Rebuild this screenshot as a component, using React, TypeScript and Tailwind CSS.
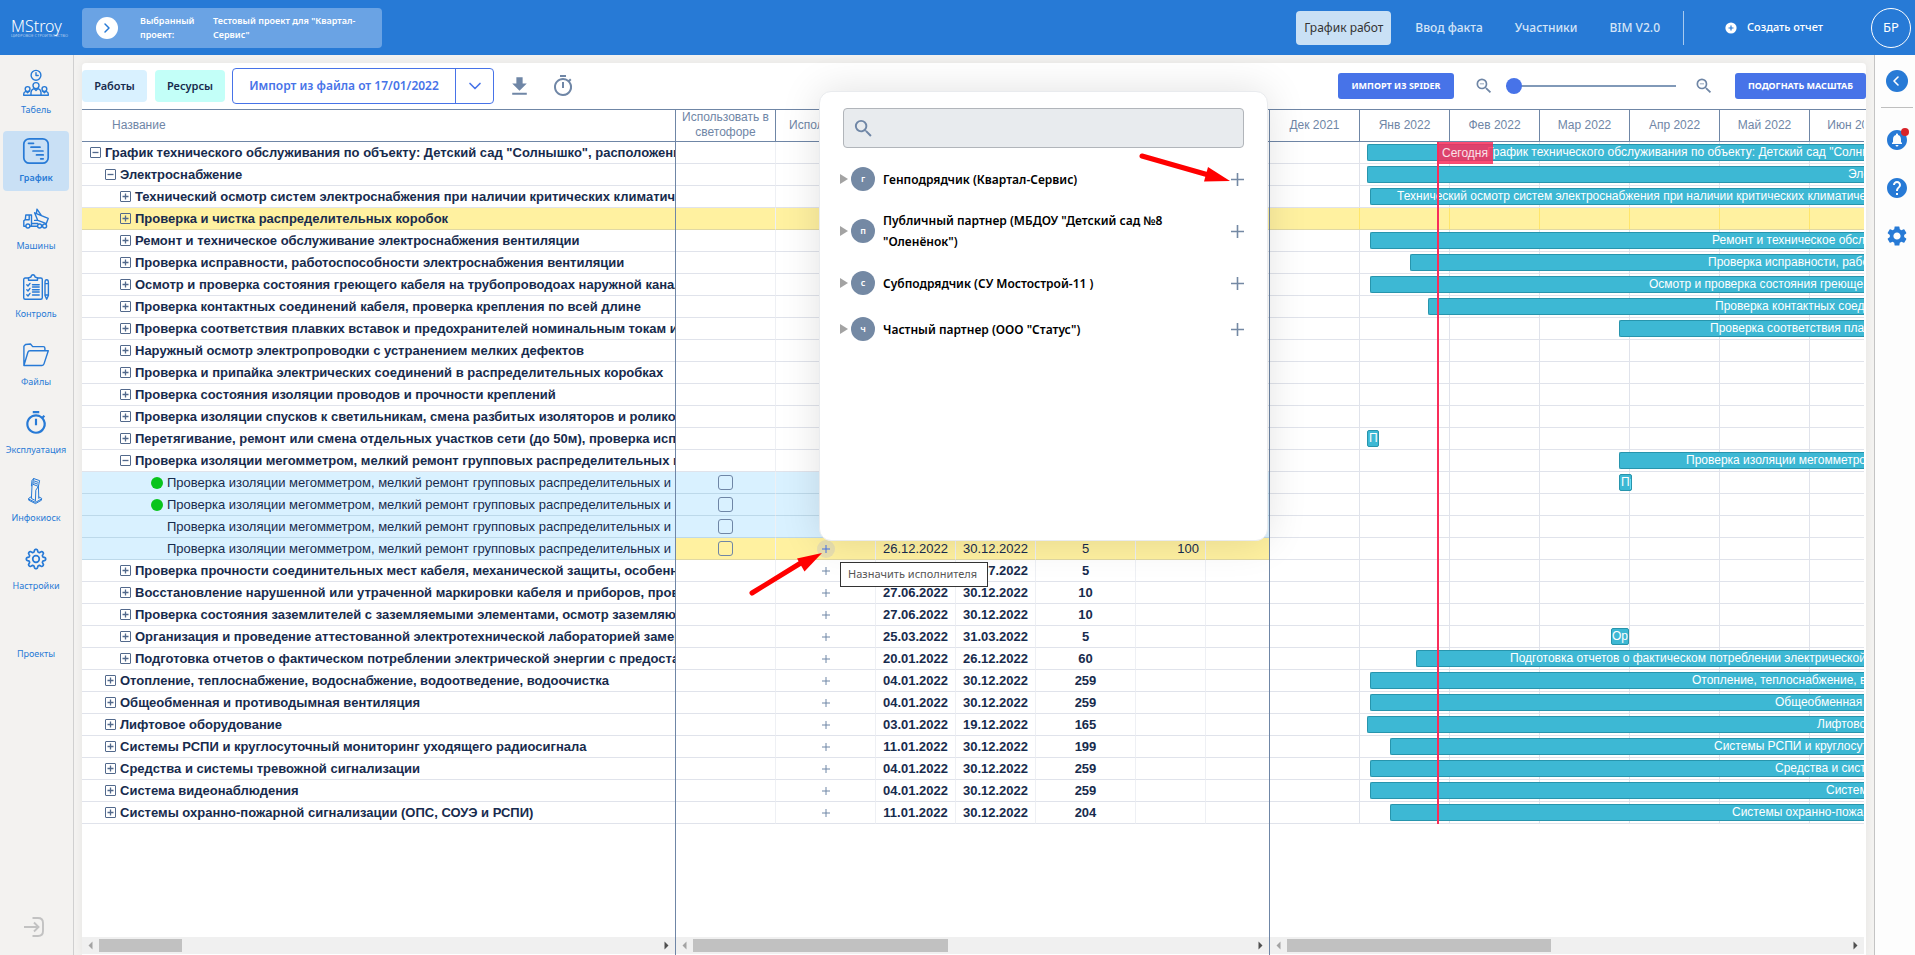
import type { ReactNode } from 'react';
import clsx from 'clsx';
import { ChevronDown, ChevronLeft, ChevronRight } from 'lucide-react';
import {
  MdCircleNotifications,
  MdFileDownload,
  MdHelp,
  MdOutlineTimer,
  MdSearch,
  MdSettings,
  MdZoomOut,
} from 'react-icons/md';

interface Task {
  name: string;
  level: number;
  open?: boolean;
  leaf?: boolean;
  dot?: boolean;
  start?: string;
  end?: string;
  days?: string;
  percent?: string;
  // x of the bar and of its label on the time scale, in pixels
  bar?: { x: number; width?: number; label: number };
}

const MEGA = 'Проверка изоляции мегомметром, мелкий ремонт групповых распределительных и';

const TASKS: Task[] = [
  { name: 'График технического обслуживания по объекту: Детский сад "Солнышко", расположенному', level: 0, open: true, bar: { x: 97, label: 217 } },
  { name: 'Электроснабжение', level: 1, open: true, bar: { x: 97, label: 578 } },
  { name: 'Технический осмотр систем электроснабжения при наличии критических климатических', level: 2, bar: { x: 100, label: 127 } },
  { name: 'Проверка и чистка распределительных коробок', level: 2 },
  { name: 'Ремонт и техническое обслуживание электроснабжения вентиляции', level: 2, bar: { x: 100, label: 442 } },
  { name: 'Проверка исправности, работоспособности электроснабжения вентиляции', level: 2, bar: { x: 140, label: 438 } },
  { name: 'Осмотр и проверка состояния греющего кабеля на трубопроводоах наружной канализации', level: 2, bar: { x: 100, label: 379 } },
  { name: 'Проверка контактных соединений кабеля, проверка крепления по всей длине', level: 2, bar: { x: 158, label: 445 } },
  { name: 'Проверка соответствия плавких вставок и предохранителей номинальным токам и', level: 2, bar: { x: 349, label: 440 } },
  { name: 'Наружный осмотр электропроводки с устранением мелких дефектов', level: 2 },
  { name: 'Проверка и припайка электрических соединений в распределительных коробках', level: 2 },
  { name: 'Проверка состояния изоляции проводов и прочности креплений', level: 2 },
  { name: 'Проверка изоляции спусков к светильникам, смена разбитых изоляторов и роликов', level: 2 },
  { name: 'Перетягивание, ремонт или смена отдельных участков сети (до 50м), проверка исправности', level: 2, bar: { x: 97, width: 12, label: 99 } },
  { name: MEGA, level: 2, open: true, bar: { x: 349, label: 416 } },
  { name: MEGA, level: 3, leaf: true, dot: true, bar: { x: 349, width: 13, label: 351 } },
  { name: MEGA, level: 3, leaf: true, dot: true },
  { name: MEGA, level: 3, leaf: true },
  { name: MEGA, level: 3, leaf: true, start: '26.12.2022', end: '30.12.2022', days: '5', percent: '100' },
  { name: 'Проверка прочности соединительных мест кабеля, механической защиты, особенно', level: 2, end: '29.07.2022', days: '5' },
  { name: 'Восстановление нарушенной или утраченной маркировки кабеля и приборов, проверка', level: 2, start: '27.06.2022', end: '30.12.2022', days: '10' },
  { name: 'Проверка состояния заземлителей с заземляемыми элементами, осмотр заземляющих', level: 2, start: '27.06.2022', end: '30.12.2022', days: '10' },
  { name: 'Организация и проведение аттестованной электротехнической лабораторией замеров', level: 2, start: '25.03.2022', end: '31.03.2022', days: '5', bar: { x: 341, width: 18, label: 342 } },
  { name: 'Подготовка отчетов о фактическом потреблении электрической энергии с предоставлением', level: 2, start: '20.01.2022', end: '26.12.2022', days: '60', bar: { x: 146, label: 240 } },
  { name: 'Отопление, теплоснабжение, водоснабжение, водоотведение, водоочистка', level: 1, start: '04.01.2022', end: '30.12.2022', days: '259', bar: { x: 100, label: 422 } },
  { name: 'Общеобменная и противодымная вентиляция', level: 1, start: '04.01.2022', end: '30.12.2022', days: '259', bar: { x: 100, label: 505 } },
  { name: 'Лифтовое оборудование', level: 1, start: '03.01.2022', end: '19.12.2022', days: '165', bar: { x: 97, label: 547 } },
  { name: 'Системы РСПИ и круглосуточный мониторинг уходящего радиосигнала', level: 1, start: '11.01.2022', end: '30.12.2022', days: '199', bar: { x: 120, label: 444 } },
  { name: 'Средства и системы тревожной сигнализации', level: 1, start: '04.01.2022', end: '30.12.2022', days: '259', bar: { x: 100, label: 505 } },
  { name: 'Система видеонаблюдения', level: 1, start: '04.01.2022', end: '30.12.2022', days: '259', bar: { x: 100, label: 556 } },
  { name: 'Системы охранно-пожарной сигнализации (ОПС, СОУЭ и РСПИ)', level: 1, start: '11.01.2022', end: '30.12.2022', days: '204', bar: { x: 120, label: 462 } },
];

const HOVERED = 3;
const SELECTED = 18;

const MONTHS = ['Дек 2021', 'Янв 2022', 'Фев 2022', 'Мар 2022', 'Апр 2022', 'Май 2022', 'Июн 2022'];

const CONTRACTORS = [
  { letter: 'г', name: 'Генподрядчик (Квартал-Сервис)' },
  { letter: 'п', name: 'Публичный партнер (МБДОУ "Детский сад №8 "Оленёнок")' },
  { letter: 'с', name: 'Субподрядчик (СУ Мостострой-11 )' },
  { letter: 'ч', name: 'Частный партнер (ООО "Статус")' },
];

// eight-lobed gear outline around 13,13
const GEAR = Array.from({ length: 97 }, (_, i) => {
  const a = (i / 96) * Math.PI * 2;
  const r = 8.4 + 1.3 * Math.tanh(2 * Math.cos(8 * a));
  return `${i ? 'L' : 'M'}${(13 + r * Math.sin(a)).toFixed(2)} ${(13 - r * Math.cos(a)).toFixed(2)}`;
}).join('') + 'Z';

function Line({ children, width = 1.4 }: { children: ReactNode; width?: number }) {
  return (
    <svg
      viewBox="0 0 26 26"
      className="size-[26px] overflow-visible"
      fill="none"
      stroke="currentColor"
      strokeWidth={width}
      strokeLinecap="round"
      strokeLinejoin="round"
    >
      {children}
    </svg>
  );
}

const MENU: { label: string; icon: ReactNode; active?: boolean }[] = [
  {
    label: 'Табель',
    icon: (
      <Line>
        <circle cx="13" cy="5.3" r="4.9" />
        <path d="M13 2.6v2.9h2.2" />
        <circle cx="13" cy="15.6" r="3" />
        <circle cx="4.6" cy="19" r="2.4" />
        <circle cx="21.4" cy="19" r="2.4" />
        <path d="M8 25.3v-2.8c0-2 1-3.3 3-3.9l2 2 2-2c2 .6 3 1.9 3 3.9v2.8M.7 25.3V24c0-1.5.8-2.3 2.2-2.7l1.7 1.4 1.7-1.4M25.3 25.3V24c0-1.5-.8-2.3-2.2-2.7l-1.7 1.4-1.7-1.4M.7 25.3h24.6" />
      </Line>
    ),
  },
  {
    label: 'График',
    active: true,
    icon: (
      <Line width={1.7}>
        <rect x=".8" y=".8" width="24.4" height="24.4" rx="5.5" />
        <path d="M5.5 5.3h5M8 9.2h9M10 13h10M13.5 16.9h6.7M17.7 20.8h2.5" />
      </Line>
    ),
  },
  {
    label: 'Машины',
    icon: (
      <Line>
        <path d="M2.6 20.2H.8v-5.4l1.5-1.2.5-4.6h5.7v11.2H7.2M2.6 13.8h3.6V9.2M8.6 17.5h6.2M8.6 20.2h5.6M11.6 6.8l13.6 5.6-2 5.3-3-1.3M11.6 6.8l3.2 7.6 5.4 2M14 3.2l-.6 4.2M14 3.2l4.3 6.2M11.6 14.4h3.2" />
        <circle cx="4.9" cy="20" r="2" />
        <circle cx="16.6" cy="20" r="2" />
        <circle cx="21.6" cy="20" r="2" />
      </Line>
    ),
  },
  {
    label: 'Контроль',
    icon: (
      <Line>
        <path d="M5.5 4H2.2C1.3 4 .7 4.6.7 5.5v18.2c0 .9.6 1.5 1.5 1.5h15.6c.9 0 1.5-.6 1.5-1.5V5.5c0-.9-.6-1.5-1.5-1.5h-3.3" />
        <path d="M5.5 6.2V3.8L8 3c.2-1.4.9-2.2 2-2.2s1.8.8 2 2.2l2.5.8v2.4z" />
        <path d="M3.8 10.8L5 12l2-2.6M3.8 15.8L5 17l2-2.6M3.8 20.8L5 22l2-2.6M9.5 10.8h6.7M9.5 13h6.7M9.5 15.8h6.7M9.5 18h6.7M9.5 21h6.7" />
        <path d="M22 8.5c0-3.6 3.4-3.6 3.4 0v13l-1.7 3.7-1.7-3.7zM22 9.6h3.4M22 21h3.4" />
      </Line>
    ),
  },
  {
    label: 'Файлы',
    icon: (
      <Line>
        <path d="M.9 23.500V4.200l1.600-1.700 5-.5 2.200 2.600h10.600c1 0 1.600.6 1.600 1.600v2.500M.9 23.500l4-13.200c.3-1 1-1.600 2-1.600h18.400L21 21.900c-.3 1-1 1.600-2 1.600z" />
      </Line>
    ),
  },
  { label: 'Эксплуатация', icon: <MdOutlineTimer className="size-[26px]" /> },
  {
    label: 'Инфокиоск',
    icon: (
      <Line width={1}>
        <path d="M10.800.6l5.800 2-1.200 5.800-5.200-2zM10.800.6L9 2.400 8.400 8l1.800-1.600M9 7.800l-.6 12.700 3 1.500M15.400 8.400l-2.600 3.800-.4 11M15.400 8.400l.4 12M11.400 3l3.600 1.300M11 4.800l3.600 1.300M8.400 18.600l-2.500 1.600c-.5.3-.5.7 0 1l6.600 3.200 5.800-3.300c.5-.3.5-.7 0-1L15.800 19M5.700 21v1.200l6.800 3.400 6-3.400V21" />
      </Line>
    ),
  },
  {
    label: 'Настройки',
    icon: (
      <Line width={1.7}>
        <path d={GEAR} />
        <circle cx="13" cy="13" r="3.3" />
      </Line>
    ),
  },
  { label: 'Проекты', icon: <span className="size-[26px]" /> },
];

function Header() {
  return (
    <header className="flex h-[55px] shrink-0 items-center bg-[#277ad6] pr-1 text-xs text-white">
      <a href="#" className="flex w-[82px] flex-col pl-[11px]">
        <span className="text-base leading-4 font-light">MStroy</span>
        <span className="text-[4px] leading-[4px] text-white/60">ЦИФРОВОЕ СТРОИТЕЛЬСТВО</span>
      </a>
      <button
        type="button"
        className="flex h-10 w-[300px] items-center rounded bg-[#6aa3e4] text-left text-[9px] leading-[14px] font-semibold"
      >
        <span className="ml-3.5 flex size-[22px] items-center justify-center rounded-full bg-white text-[#277ad6]">
          <ChevronRight size={16} strokeWidth={2.2} />
        </span>
        <span className="ml-[22px] w-[73px] pr-4">Выбранный проект:</span>
        <span className="w-[160px]">Тестовый проект для "Квартал-Сервис"</span>
      </button>

      <nav className="ml-auto flex items-center gap-4 font-medium text-[#d4e4f7]">
        <a href="#" className="flex h-[34px] items-center rounded-sm bg-[#c9e0f5] px-2 font-normal text-[#333]">
          График работ
        </a>
        <a href="#" className="px-2">Ввод факта</a>
        <a href="#" className="px-2">Участники</a>
        <a href="#" className="px-2">BIM V2.0</a>
      </nav>
      <div className="ml-[15px] h-[34px] w-px bg-[#a8caef]" />
      <button type="button" className="ml-[41px] flex items-center gap-2.5 text-[11px] font-medium">
        <svg viewBox="0 0 12 12" className="size-3">
          <circle cx="6" cy="6" r="5.6" fill="#fff" />
          <path d="M6 3.500v5M3.500 6h5" stroke="#277ad6" strokeWidth="1.2" />
        </svg>
        Создать отчет
      </button>
      <button
        type="button"
        className="ml-12 flex size-10 items-center justify-center rounded-full border border-white text-[13px]"
      >
        БР
      </button>
    </header>
  );
}

function Sidebar() {
  return (
    <aside className="flex w-[74px] shrink-0 flex-col border-r border-[#d0d0d0] pt-2 text-[#277ad6]">
      <nav className="flex flex-col gap-2 pr-1 pl-[3px]">
        {MENU.map((item) => (
          <a
            key={item.label}
            href="#"
            className={clsx(
              'flex h-[60px] flex-col items-center rounded-sm pt-[7px] text-[9px] leading-3',
              item.active && 'bg-[#c9e0f5] font-semibold',
            )}
          >
            {item.icon}
            <span className="mt-2">{item.label}</span>
          </a>
        ))}
      </nav>
      <button type="button" aria-label="Выход" className="mt-auto mb-[18px] ml-6 self-start text-[#c2c2c2]">
        <svg viewBox="0 0 20 20" className="size-5" fill="none" stroke="currentColor" strokeWidth="1.9">
          <path d="M0 10h14.500M10 5.500l4.500 4.500-4.500 4.500M8.500 1H14c3 0 5 2 5 5v8c0 3-2 5-5 5H8.500" />
        </svg>
      </button>
    </aside>
  );
}

function Toolbar() {
  return (
    <div className="flex h-[47px] shrink-0 items-center border-b border-[#6f86a6] text-[#6f86a6]">
      <button type="button" className="h-8 w-[65px] rounded-sm bg-[#d9f1ff] text-[11px] font-semibold text-[#172b4d]">
        Работы
      </button>
      <button type="button" className="ml-2 h-8 w-[70px] rounded-sm bg-[#c3fff8] text-[11px] font-semibold text-[#172b4d]">
        Ресурсы
      </button>
      <div className="ml-[7px] flex h-9 w-[262px] rounded-sm border border-[#4773e8] text-[#4773e8]">
        <button type="button" className="flex-1 text-xs font-semibold">Импорт из файла от 17/01/2022</button>
        <button type="button" aria-label="Выбрать файл" className="flex w-[38px] items-center justify-center border-l border-[#4773e8]">
          <ChevronDown size={20} strokeWidth={2} />
        </button>
      </div>
      <button type="button" aria-label="Скачать" className="ml-[13px]">
        <MdFileDownload className="size-[25px]" />
      </button>
      <button type="button" aria-label="Таймер" className="ml-[19px]">
        <MdOutlineTimer className="size-6" />
      </button>

      <button
        type="button"
        className="ml-auto h-[26px] w-[116px] rounded-[3px] bg-[#4773e8] text-[9px] font-bold text-white"
      >
        ИМПОРТ ИЗ SPIDER
      </button>
      <button type="button" aria-label="Уменьшить" className="ml-5">
        <MdZoomOut className="size-5" />
      </button>
      <input
        type="range"
        aria-label="Масштаб"
        defaultValue={0}
        className="mx-3 h-4 w-[170px] appearance-none bg-transparent [&::-webkit-slider-runnable-track]:h-0.5 [&::-webkit-slider-runnable-track]:bg-[#8199b8] [&::-webkit-slider-thumb]:-mt-[7px] [&::-webkit-slider-thumb]:size-4 [&::-webkit-slider-thumb]:appearance-none [&::-webkit-slider-thumb]:rounded-full [&::-webkit-slider-thumb]:bg-[#4773e8]"
      />
      <button type="button" aria-label="Увеличить" className="ml-1.5">
        <MdZoomOut className="size-5" />
      </button>
      <button
        type="button"
        className="ml-[21px] h-[26px] w-[131px] rounded-[3px] bg-[#4773e8] text-[9px] font-bold text-white"
      >
        ПОДОГНАТЬ МАСШТАБ
      </button>
    </div>
  );
}

function Toggle({ open }: { open?: boolean }) {
  return (
    <button type="button" aria-label={open ? 'Свернуть' : 'Развернуть'} className="mr-1 size-[11px] shrink-0">
      <svg viewBox="0 0 11 11" className="size-[11px]" fill="none" stroke="#52698c">
        <rect x=".5" y=".5" width="10" height="10" rx=".5" />
        <path d={open ? 'M2.500 5.500h6' : 'M2.500 5.500h6M5.500 2.500v6'} strokeWidth="1.3" />
      </svg>
    </button>
  );
}

function ScrollBar({ thumb }: { thumb: ReactNode }) {
  return (
    <div className="mt-auto mb-px flex h-[17px] shrink-0 items-center bg-[#f0f0f0]">
      <svg viewBox="0 0 17 17" className="size-[17px]" fill="#a3a3a3">
        <path d="M10.500 4.500v8l-4-4z" />
      </svg>
      {thumb}
      <svg viewBox="0 0 17 17" className="ml-auto size-[17px]" fill="#505050">
        <path d="M6.500 4.500v8l4-4z" />
      </svg>
    </div>
  );
}

function NamePane() {
  return (
    <div className="flex w-[594px] shrink-0 flex-col border-r border-[#6f86a6]">
      <table className="w-full table-fixed border-separate border-spacing-0">
        <thead>
          <tr>
            <th className="h-8 border-b border-[#6f86a6] p-0 pb-0.5 pl-[30px] text-left text-xs font-normal text-[#6f86a6]">
              Название
            </th>
          </tr>
        </thead>
        <tbody>
          {TASKS.map((task, i) => (
            <tr key={i} className={clsx(i === HOVERED && 'bg-[#fff1a0]', task.leaf && 'bg-[#d9f1ff]')}>
              <td
                className={clsx(
                  'h-[22px] overflow-hidden border-b p-0',
                  i === HOVERED ? 'border-[#e0d8a4]' : task.leaf ? 'border-[#bdd9ea]' : 'border-[#e0e3eb]',
                )}
              >
                <div
                  className={clsx(
                    'flex h-[21px] items-center text-[13px] whitespace-nowrap text-[#172b4d]',
                    task.level === 0 && 'pl-2 font-bold',
                    task.level === 1 && 'pl-[23px] font-bold',
                    task.level === 2 && 'pl-[38px] font-bold',
                    task.level === 3 && 'pl-[69px]',
                  )}
                >
                  {task.leaf ? (
                    <span className={clsx('mr-1 size-3 shrink-0 rounded-full', task.dot && 'bg-[#09c41c]')} />
                  ) : (
                    <Toggle open={task.open} />
                  )}
                  {task.name}
                </div>
              </td>
            </tr>
          ))}
        </tbody>
      </table>
      <ScrollBar thumb={<div className="h-[13px] w-[83px] bg-[#c1c1c1]" />} />
    </div>
  );
}

function DataPane() {
  return (
    <div className="relative flex w-[594px] shrink-0 flex-col border-r border-[#6f86a6]">
      <table className="w-full table-fixed border-separate border-spacing-0">
        <colgroup>
          <col className="w-[100px]" />
          <col className="w-[100px]" />
          <col className="w-[80px]" />
          <col className="w-[80px]" />
          <col className="w-[100px]" />
          <col className="w-[70px]" />
          <col />
        </colgroup>
        <thead>
          <tr className="text-xs leading-[15px] text-[#6f86a6] [&>th]:h-8 [&>th]:border-r [&>th]:border-b [&>th]:border-[#6f86a6] [&>th]:p-0 [&>th]:pb-px [&>th]:font-normal [&>th:last-child]:border-r-0">
            <th>Использовать в светофоре</th>
            <th>Исполнитель</th>
            <th />
            <th />
            <th />
            <th />
            <th />
          </tr>
        </thead>
        <tbody>
          {TASKS.map((task, i) => {
            const yellow = i === HOVERED || i === SELECTED;
            return (
              <tr
                key={i}
                className={clsx(
                  'text-center text-[13px] leading-[21px] text-[#172b4d] [&>td]:h-[22px] [&>td]:border-r [&>td]:border-b [&>td]:border-r-[#eef0f4] [&>td]:p-0 [&>td:last-child]:border-r-0',
                  !task.leaf && 'font-bold',
                  yellow
                    ? 'bg-[#fff1a0] [&>td]:border-b-[#e0d8a4]'
                    : task.leaf
                      ? 'bg-[#d9f1ff] [&>td]:border-b-[#bdd9ea]'
                      : '[&>td]:border-b-[#e0e3eb]',
                )}
              >
                <td>
                  {task.leaf && (
                    <input
                      type="checkbox"
                      aria-label={task.name}
                      className="mx-auto block size-[15px] appearance-none rounded-[3px] border border-[#6f86a6]"
                    />
                  )}
                </td>
                <td>
                  {task.days && (
                    <button
                      type="button"
                      aria-label="Назначить исполнителя"
                      className={clsx(
                        'mx-auto flex size-[18px] items-center justify-center rounded-full',
                        i === SELECTED ? 'bg-[#e9e0b0] text-[#4773e8]' : 'text-[#6f86a6]',
                      )}
                    >
                      <svg viewBox="0 0 8 8" className="size-2" stroke="currentColor">
                        <path d="M4 0v8M0 4h8" />
                      </svg>
                    </button>
                  )}
                </td>
                <td>{task.start}</td>
                <td>{task.end}</td>
                <td>{task.days}</td>
                <td className="text-right"><span className="pr-1.5">{task.percent}</span></td>
                <td />
              </tr>
            );
          })}
        </tbody>
      </table>
      <ScrollBar thumb={<div className="h-[13px] w-[255px] bg-[#c1c1c1]" />} />
      <ContractorPopup />
      <div
        role="tooltip"
        className="absolute top-[452px] left-[164px] z-20 flex h-[25px] w-[148px] items-center border border-[#333] bg-white pl-[7px] font-['Noto_Sans',sans-serif] text-[11px] text-[#555]"
      >
        Назначить исполнителя
      </div>
      {/* pointers to the two "plus" buttons */}
      <svg viewBox="0 0 594 500" className="pointer-events-none absolute top-0 left-0 z-30 h-[500px] w-[594px]" fill="#f00">
        <path d="M466 46l70 20" stroke="#f00" strokeWidth="5" strokeLinecap="round" />
        <path d="M554 71l-22-14-4 14.500z" />
        <path d="M76 483l52-32" stroke="#f00" strokeWidth="5" strokeLinecap="round" />
        <path d="M146 443l-25 5.500 7.500 13z" />
      </svg>
    </div>
  );
}

function ContractorPopup() {
  return (
    <div className="absolute -top-[19px] right-px z-10 h-[450px] w-[449px] rounded-xl border border-[#e9ebee] bg-white px-[23px] pt-4 font-['Noto_Sans',sans-serif] shadow-[0_0_40px_rgba(0,0,0,0.12)]">
      <label className="flex h-10 items-center rounded border border-[#b1b5ba] bg-[#e8ebee] px-2 text-[#6f86a6]">
        <MdSearch className="size-[23px]" />
        <input type="text" aria-label="Поиск" className="flex-1 bg-transparent text-xs outline-none" />
      </label>
      <ul className="mt-4 flex flex-col gap-4">
        {CONTRACTORS.map((c) => (
          <li key={c.letter} className="-ml-[3px] flex min-h-[30px] items-center">
            <svg viewBox="0 0 8 10" className="mr-[3px] h-2.5 w-2" fill="#a3a3a3">
              <path d="M0 0l8 5-8 5z" />
            </svg>
            <span className="flex size-6 shrink-0 items-center justify-center rounded-full bg-[#7489a4] text-[9px] font-semibold text-white">
              {c.letter}
            </span>
            <span className="ml-2 w-[300px] text-xs leading-[21px] font-semibold text-black">{c.name}</span>
            <button type="button" aria-label="Добавить" className="ml-auto text-[#7489a4]">
              <svg viewBox="0 0 13 13" className="size-[13px]" stroke="currentColor" strokeWidth="1.6">
                <path d="M6.500 0v13M0 6.500h13" />
              </svg>
            </button>
          </li>
        ))}
      </ul>
    </div>
  );
}

function GanttPane() {
  return (
    <div className="mr-0.5 flex min-w-0 flex-1 flex-col overflow-hidden">
      <div className="flex h-8 shrink-0 border-b border-[#6f86a6] text-xs text-[#6f86a6]">
        {MONTHS.map((m) => (
          <div key={m} className="flex w-[90px] shrink-0 items-center justify-center border-r border-[#6f86a6] pb-0.5">
            {m}
          </div>
        ))}
      </div>
      <div className="relative">
        {TASKS.map((task, i) => (
          <div
            key={i}
            className={clsx(
              'relative flex h-[22px] border-b pt-0.5',
              i === HOVERED ? 'border-[#e0d8a4] bg-[#fff1a0]' : 'border-[#e0e3eb]',
            )}
          >
            <div className="absolute inset-0 flex">
              {MONTHS.map((m) => (
                <span
                  key={m}
                  className={clsx('w-[90px] shrink-0 border-r', i === HOVERED ? 'border-[#ffe66b]' : 'border-[#e0e3eb]')}
                />
              ))}
            </div>
            {task.bar && (
              <div
                className={clsx(
                  'relative h-[17px] overflow-hidden border border-[#2795ad] bg-[#3db8d4] text-xs leading-[15px] whitespace-nowrap text-white',
                  task.bar.width ? 'rounded-xs' : 'flex-1 rounded-l-xs border-r-0',
                )}
                style={{ marginLeft: task.bar.x, width: task.bar.width }}
              >
                <span style={{ marginLeft: task.bar.label - task.bar.x - 1 }}>{task.name}</span>
              </div>
            )}
          </div>
        ))}
        <div className="absolute inset-y-0 left-[167px] border-l-2 border-[#f92d5a]">
          <div className="flex h-[22px] w-[54px] items-center bg-[#f92d5a]/85 pl-[3px] text-xs text-white/85">Сегодня</div>
        </div>
      </div>
      <ScrollBar thumb={<div className="h-[13px] w-[264px] bg-[#c1c1c1]" />} />
    </div>
  );
}

function RightBar() {
  return (
    <aside className="flex w-[41px] shrink-0 flex-col items-center border-l border-[#c4c4c4] bg-[#fdfdfd] pt-[15px] pl-1 text-[#277ad6]">
      <button
        type="button"
        aria-label="Развернуть панель"
        className="flex size-[22px] items-center justify-center rounded-full bg-[#277ad6] pr-0.5 text-white"
      >
        <ChevronLeft size={16} strokeWidth={2.4} />
      </button>
      <div className="mt-[15px] h-px w-8 bg-[#bfbfbf]" />
      <button type="button" aria-label="Уведомления" className="relative mt-5">
        <MdCircleNotifications className="size-6" />
        <span className="absolute top-0 right-0 size-2 rounded-full bg-[#d8232a]" />
      </button>
      <button type="button" aria-label="Помощь" className="mt-6">
        <MdHelp className="size-6" />
      </button>
      <button type="button" aria-label="Параметры" className="mt-6">
        <MdSettings className="size-6" />
      </button>
    </aside>
  );
}

export default function App() {
  return (
    <div className="flex min-h-screen flex-col overflow-hidden bg-[#f3f2f0] font-['Noto_Sans',sans-serif]">
      <Header />
      <div className="flex flex-1">
        <Sidebar />
        <main className="mt-2 mr-2 ml-2 flex min-w-0 flex-1 flex-col rounded-t bg-white shadow-[0_0_8px_rgba(0,0,0,0.06)]">
          <Toolbar />
          <div className="flex flex-1 font-['Liberation_Sans',Arial,sans-serif]">
            <NamePane />
            <DataPane />
            <GanttPane />
          </div>
        </main>
        <RightBar />
      </div>
    </div>
  );
}
